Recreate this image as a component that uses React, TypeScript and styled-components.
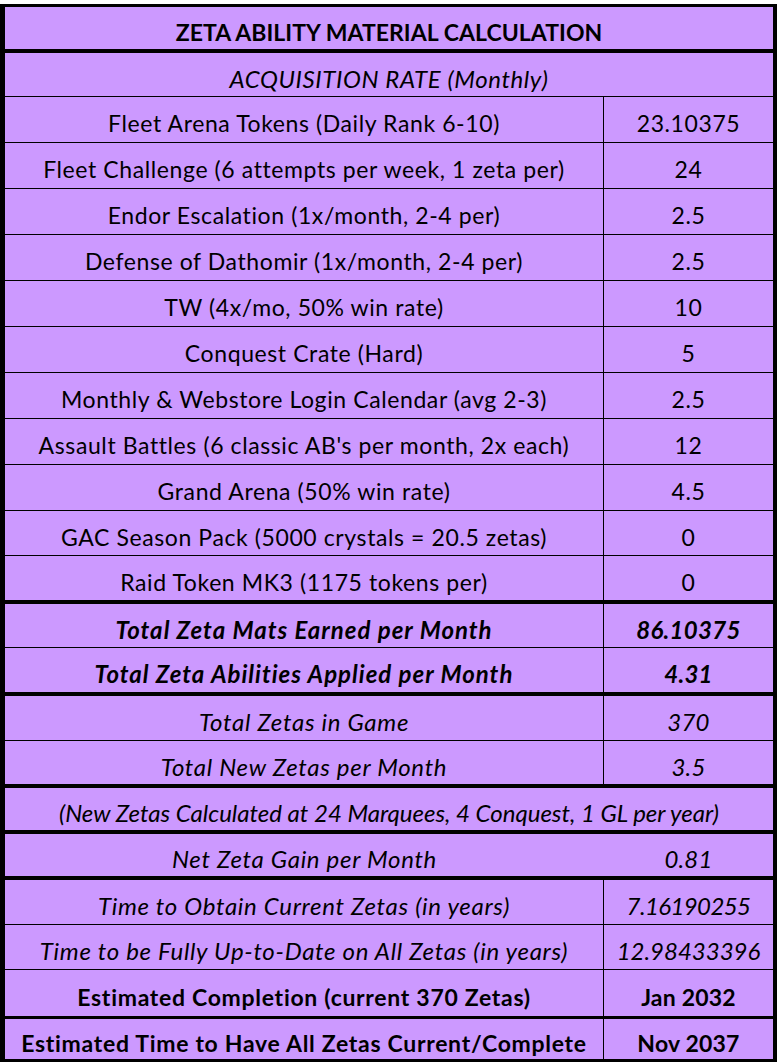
import React from "react";
import styled, { createGlobalStyle, css } from "styled-components";

const Global = createGlobalStyle`
  html, body { margin: 0; padding: 0; background: #ffffff; }
  body { font-family: Lato, "Open Sans", sans-serif; color: #000; }
`;

const Sheet = styled.div`
  margin-top: 4px;
  width: 777px;
  box-sizing: border-box;
  border-style: solid;
  border-color: #000;
  border-width: 3px 4px 3px 5px;
  background: #cc99ff;
`;

const Section = styled.div<{ $thick?: number }>`
  border-top: ${(p) => p.$thick ?? 4}px solid #000;
  &:first-child { border-top: none; }
`;

type Weight = "normal" | "bold";
type Slant = "normal" | "italic";

const Row = styled.div<{ $h: number }>`
  display: grid;
  grid-template-columns: 599px 169px;
  height: ${(p) => p.$h}px;
  & + & { border-top: 1px solid #000; }
`;

const typeFor = (w: Weight, s: Slant) => {
  if (w === "bold" && s === "italic") return css`font-size: 24px; letter-spacing: 1px;`;
  if (w === "bold") return css`font-size: 23px; letter-spacing: 0.7px;`;
  if (s === "italic") return css`font-size: 24px; letter-spacing: 0.7px;`;
  return css`font-size: 23px; letter-spacing: 0.6px;`;
};

const Cell = styled.div<{ $w: Weight; $s: Slant; $divider?: boolean; $ls?: number }>`
  display: flex;
  align-items: center;
  justify-content: center;
  padding-top: 7px;
  box-sizing: border-box;
  font-weight: ${(p) => (p.$w === "bold" ? 700 : 400)};
  font-style: ${(p) => p.$s};
  white-space: nowrap;
  ${(p) => typeFor(p.$w, p.$s)}
  ${(p) =>
    p.$ls !== undefined &&
    css`
      letter-spacing: ${p.$ls}px;
    `}
  ${(p) =>
    p.$divider &&
    css`
      border-right: 1px solid #000;
    `}
`;

const FullCell = styled(Cell)`
  grid-column: 1 / -1;
`;

type RowData = {
  label: string;
  value?: string;
  h: number;
  w?: Weight;
  s?: Slant;
  noDivider?: boolean;
  ls?: number;
  vls?: number;
};

const sections: { thick?: number; rows: RowData[] }[] = [
  { rows: [{ label: "ZETA ABILITY MATERIAL CALCULATION", h: 42, w: "bold", ls: 0.05 }] },
  {
    rows: [
      { label: "ACQUISITION RATE (Monthly)", h: 43, s: "italic", ls: 0.6 },
      { label: "Fleet Arena Tokens (Daily Rank 6-10)", value: "23.10375", h: 45 },
      { label: "Fleet Challenge (6 attempts per week, 1 zeta per)", value: "24", h: 45 },
      { label: "Endor Escalation (1x/month, 2-4 per)", value: "2.5", h: 45 },
      { label: "Defense of Dathomir (1x/month, 2-4 per)", value: "2.5", h: 45 },
      { label: "TW (4x/mo, 50% win rate)", value: "10", h: 45 },
      { label: "Conquest Crate (Hard)", value: "5", h: 45 },
      { label: "Monthly & Webstore Login Calendar (avg 2-3)", value: "2.5", h: 45 },
      { label: "Assault Battles (6 classic AB's per month, 2x each)", value: "12", h: 45 },
      { label: "Grand Arena (50% win rate)", value: "4.5", h: 45 },
      { label: "GAC Season Pack (5000 crystals = 20.5 zetas)", value: "0", h: 44 },
      { label: "Raid Token MK3 (1175 tokens per)", value: "0", h: 44 },
    ],
  },
  {
    rows: [
      { label: "Total Zeta Mats Earned per Month", value: "86.10375", h: 43, w: "bold", s: "italic", vls: 0.3 },
      { label: "Total Zeta Abilities Applied per Month", value: "4.31", h: 44, w: "bold", s: "italic", vls: 0.3 },
    ],
  },
  {
    rows: [
      { label: "Total Zetas in Game", value: "370", h: 44, s: "italic", vls: 0.2 },
      { label: "Total New Zetas per Month", value: "3.5", h: 43, s: "italic", vls: 0.2 },
    ],
  },
  {
    rows: [{ label: "(New Zetas Calculated at 24 Marquees, 4 Conquest, 1 GL per year)", h: 42, s: "italic", ls: 0 }],
  },
  {
    rows: [{ label: "Net Zeta Gain per Month", value: "0.81", h: 42, s: "italic", noDivider: true, vls: 0.2 }],
  },
  {
    rows: [
      { label: "Time to Obtain Current Zetas (in years)", value: "7.16190255", h: 44, s: "italic", vls: -0.6 },
      { label: "Time to be Fully Up-to-Date on All Zetas (in years)", value: "12.98433396", h: 44, s: "italic", vls: 0 },
      { label: "Estimated Completion (current 370 Zetas)", value: "Jan 2032", h: 46, w: "bold", vls: 0.2 },
    ],
  },
  {
    thick: 3,
    rows: [{ label: "Estimated Time to Have All Zetas Current/Complete", value: "Nov 2037", h: 40, w: "bold", vls: 0.2 }],
  },
];

export default function App() {
  return (
    <>
      <Global />
      <Sheet>
        {sections.map((sec, i) => (
          <Section key={i} $thick={sec.thick}>
            {sec.rows.map((r) => {
              const w = r.w ?? "normal";
              const s = r.s ?? "normal";
              return (
                <Row key={r.label} $h={r.h}>
                  {r.value === undefined ? (
                    <FullCell $w={w} $s={s} $ls={r.ls}>{r.label}</FullCell>
                  ) : (
                    <>
                      <Cell $w={w} $s={s} $ls={r.ls} $divider={!r.noDivider}>{r.label}</Cell>
                      <Cell $w={w} $s={s} $ls={r.vls}>{r.value}</Cell>
                    </>
                  )}
                </Row>
              );
            })}
          </Section>
        ))}
      </Sheet>
    </>
  );
}
